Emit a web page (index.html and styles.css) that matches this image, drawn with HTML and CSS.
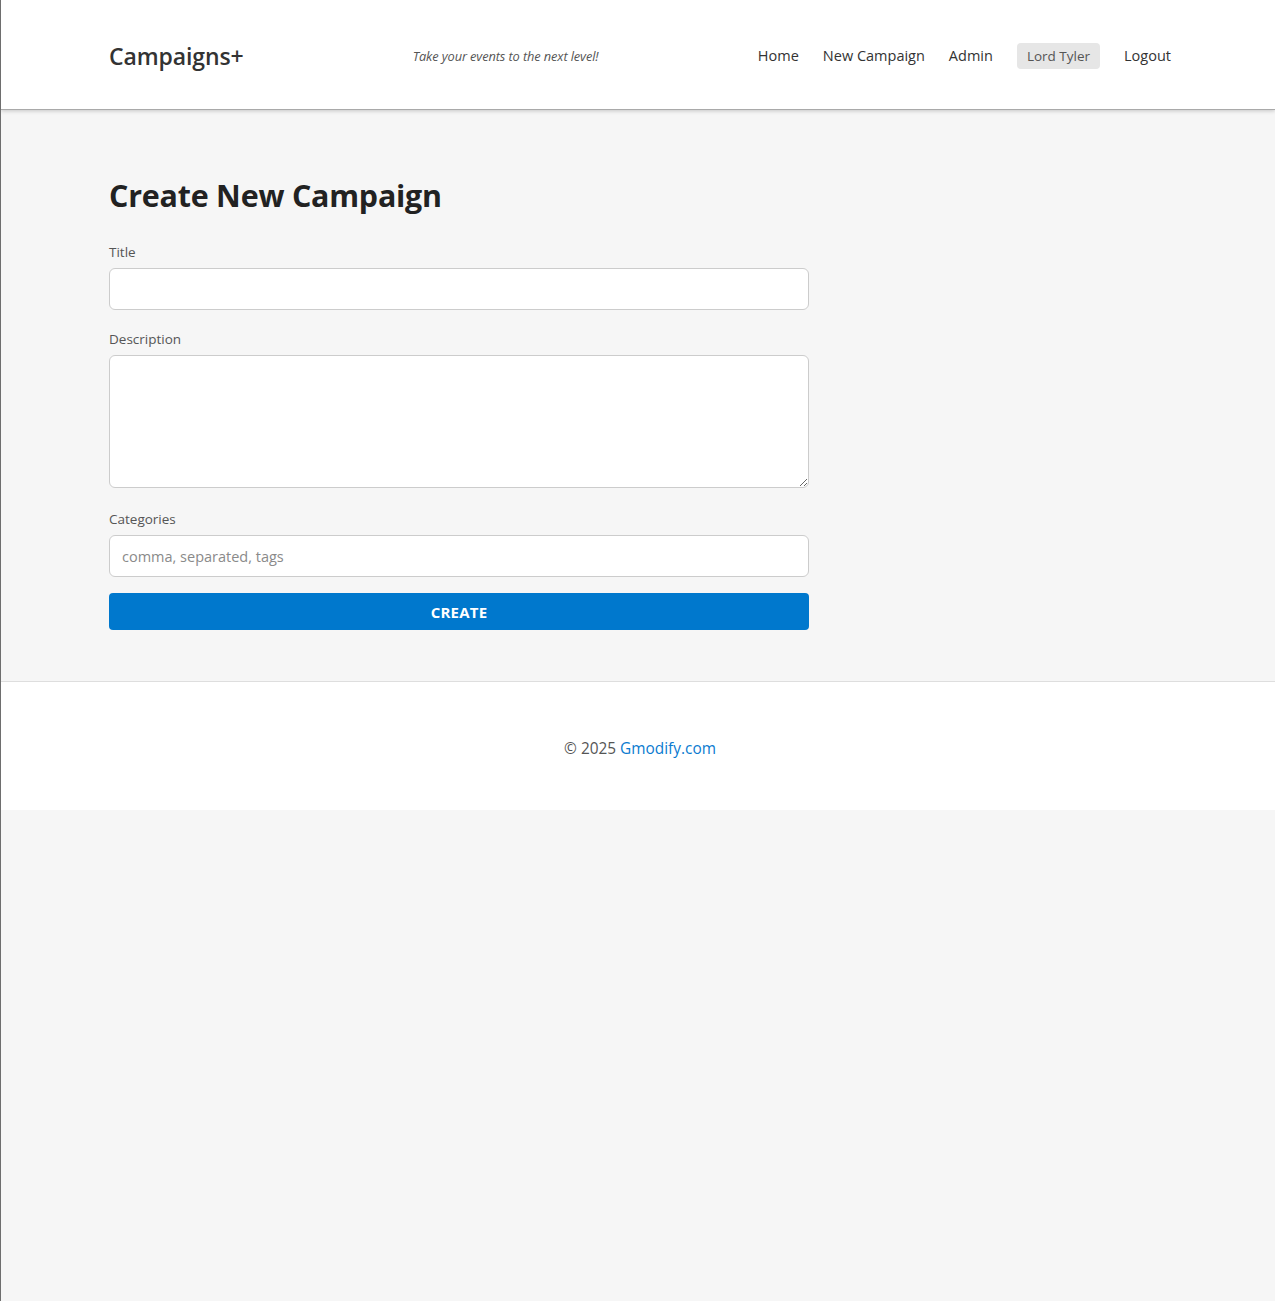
FILE: index.html
```html
<!DOCTYPE html>
<html lang="en">
<head>
<meta charset="utf-8">
<title>Create New Campaign</title>
<link rel="stylesheet" href="styles.css">
</head>
<body>
<header class="site-header">
  <div class="header-inner">
    <a class="brand" href="#">Campaigns+</a>
    <span class="tagline">Take your events to the next level!</span>
    <nav class="nav">
      <a href="#">Home</a>
      <a href="#">New Campaign</a>
      <a href="#">Admin</a>
      <span class="user-pill">Lord Tyler</span>
      <a href="#">Logout</a>
    </nav>
  </div>
</header>
<main class="main">
  <div class="container">
    <h1 class="page-title">Create New Campaign</h1>
    <form class="campaign-form">
      <div class="field">
        <label for="title">Title</label>
        <input id="title" type="text">
      </div>
      <div class="field field-desc">
        <label for="desc">Description</label>
        <textarea id="desc"></textarea>
      </div>
      <div class="field field-last">
        <label for="cats">Categories</label>
        <input id="cats" type="text" placeholder="comma, separated, tags">
      </div>
      <button type="button" class="btn-create">Create</button>
    </form>
  </div>
</main>
<footer class="site-footer">
  <p>© 2025 <a href="#">Gmodify.com</a></p>
</footer>
</body>
</html>
```
FILE: styles.css
```css
html {
  background: #f6f6f6;
  border-left: 1px solid #6e6e6e;
  min-height: 100%;
}
body {
  margin: 0;
  font-family: "Open Sans", "Noto Sans", sans-serif;
  color: #333;
}
a { text-decoration: none; color: inherit; }

.site-header {
  background: #fff;
  height: 109px;
  box-shadow: 0 1px 0 #a9a9a9, 0 2px 4px rgba(0,0,0,0.2);
  position: relative;
  z-index: 1;
}
.header-inner {
  box-sizing: border-box;
  height: 100%;
  padding-top: 2px;
  margin-left: 108px;
  width: 1062px;
  display: flex;
  align-items: center;
}
.brand {
  font-size: 23px;
  font-weight: 600;
  color: #333;
  letter-spacing: -0.1px;
}
.tagline {
  margin-left: 169px;
  font-style: italic;
  font-size: 12.8px;
  color: #555;
  letter-spacing: -0.1px;
}
.nav {
  margin-left: auto;
  display: flex;
  align-items: center;
  gap: 24px;
  font-size: 14.5px;
  color: #333;
}
.user-pill {
  background: #e6e6e6;
  border-radius: 4px;
  padding: 4px 10px;
  font-size: 13.5px;
  color: #555;
}

.main {
  padding: 67px 0 51px;
  border-bottom: 1px solid #dedede;
}
.container {
  margin-left: 108px;
  width: 700px;
}
.page-title {
  margin: 0 0 26px;
  font-size: 30.4px;
  font-weight: 700;
  color: #222;
  line-height: 40px;
  letter-spacing: -0.2px;
}
.field {
  display: flex;
  flex-direction: column;
  margin-bottom: 19px;
}
.field-desc { margin-bottom: 21px; }
.field label {
  font-size: 13.5px;
  color: #555;
  margin-bottom: 6px;
  line-height: 20px;
}
.field input,
.field textarea {
  box-sizing: border-box;
  width: 100%;
  border: 1px solid #cccccc;
  border-radius: 6px;
  background: #fff;
  font-family: inherit;
  font-size: 14.5px;
  padding: 0 12px;
  color: #333;
}
.field input { height: 42px; }
.field textarea { height: 133px; resize: vertical; padding: 10px 12px; }
.field input::placeholder { color: #8a8a8a; }
.field-last { margin-bottom: 16px; }

.btn-create {
  display: block;
  width: 700px;
  height: 37px;
  border: none;
  border-radius: 4px;
  background: #0078cd;
  color: #fff;
  font-family: inherit;
  font-weight: 700;
  font-size: 15px;
  text-transform: uppercase;
  letter-spacing: 0.2px;
}

.site-footer {
  background: #fff;
  height: 128px;
  display: flex;
  align-items: center;
  justify-content: center;
}
.site-footer p {
  margin: 4px 0 0 4px;
  font-size: 15.4px;
  color: #555;
}
.site-footer a { color: #0a7bd0; }
```
